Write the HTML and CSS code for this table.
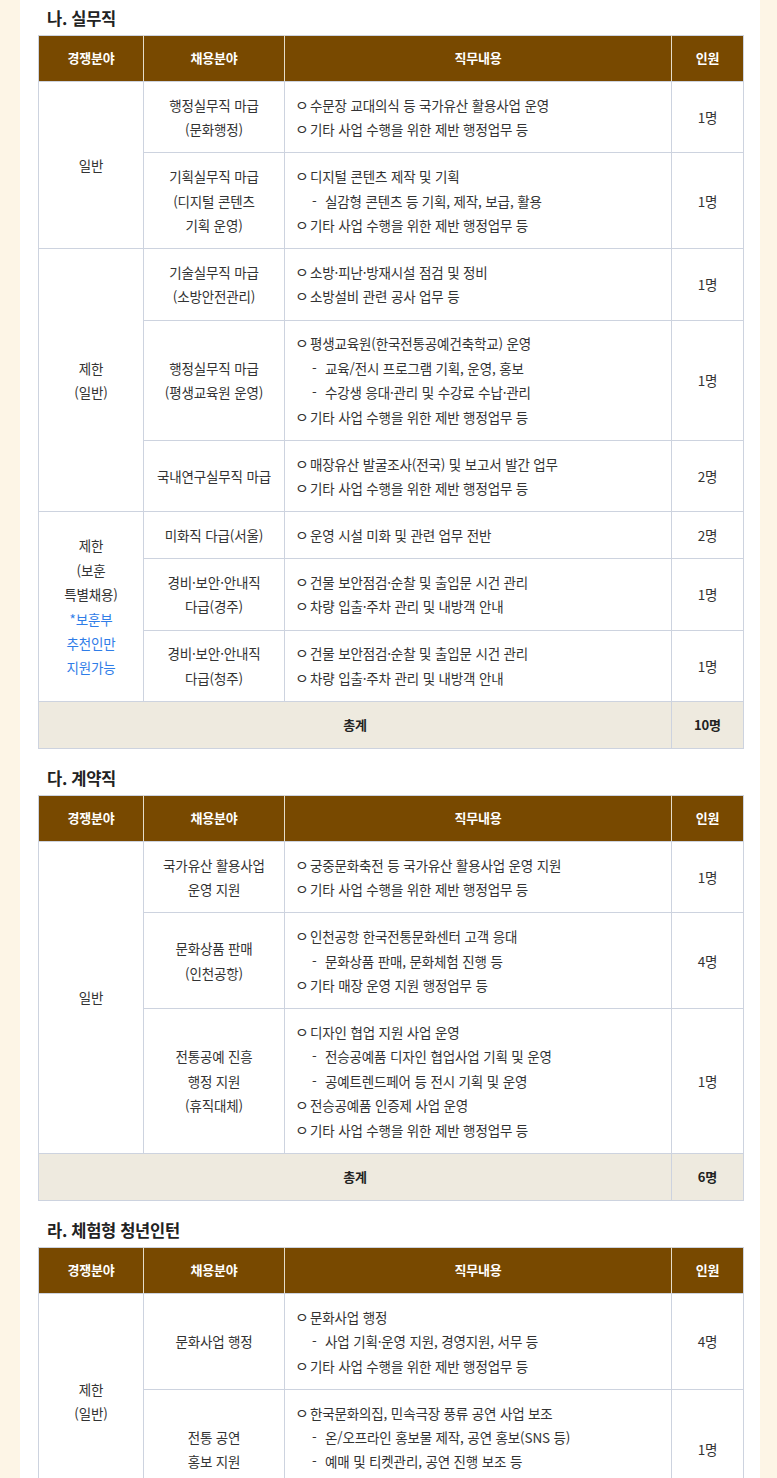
FILE: index.html
```html
<!DOCTYPE html>
<html lang="ko">
<head>
    <meta charset="UTF-8">
    <meta name="viewport" content="width=device-width, initial-scale=1.0">
    <title>채용분야</title>
    <link rel="stylesheet" href="styles.css">
</head>
<body>
    <div class="page">
        <div class="content">

            <h3 class="section-title first">나. 실무직</h3>
            <table class="recruit">
                <colgroup>
                    <col class="c-comp"><col class="c-field"><col class="c-job"><col class="c-num">
                </colgroup>
                <thead>
                    <tr><th>경쟁분야</th><th>채용분야</th><th>직무내용</th><th>인원</th></tr>
                </thead>
                <tbody>
                    <tr>
                        <td rowspan="2">일반</td>
                        <td>행정실무직 마급<br>(문화행정)</td>
                        <td class="job">
                            <p><span class="dot">ㅇ</span>수문장 교대의식 등 국가유산 활용사업 운영</p>
                            <p><span class="dot">ㅇ</span>기타 사업 수행을 위한 제반 행정업무 등</p>
                        </td>
                        <td>1명</td>
                    </tr>
                    <tr>
                        <td>기획실무직 마급<br>(디지털 콘텐츠<br>기획 운영)</td>
                        <td class="job">
                            <p><span class="dot">ㅇ</span>디지털 콘텐츠 제작 및 기획</p>
                            <p class="sub"><span class="dash">-</span>실감형 콘텐츠 등 기획, 제작, 보급, 활용</p>
                            <p><span class="dot">ㅇ</span>기타 사업 수행을 위한 제반 행정업무 등</p>
                        </td>
                        <td>1명</td>
                    </tr>
                    <tr>
                        <td rowspan="3">제한<br>(일반)</td>
                        <td>기술실무직 마급<br>(소방안전관리)</td>
                        <td class="job">
                            <p><span class="dot">ㅇ</span>소방·피난·방재시설 점검 및 정비</p>
                            <p><span class="dot">ㅇ</span>소방설비 관련 공사 업무 등</p>
                        </td>
                        <td>1명</td>
                    </tr>
                    <tr>
                        <td>행정실무직 마급<br>(평생교육원 운영)</td>
                        <td class="job">
                            <p><span class="dot">ㅇ</span>평생교육원(한국전통공예건축학교) 운영</p>
                            <p class="sub"><span class="dash">-</span>교육/전시 프로그램 기획, 운영, 홍보</p>
                            <p class="sub"><span class="dash">-</span>수강생 응대·관리 및 수강료 수납·관리</p>
                            <p><span class="dot">ㅇ</span>기타 사업 수행을 위한 제반 행정업무 등</p>
                        </td>
                        <td>1명</td>
                    </tr>
                    <tr>
                        <td>국내연구실무직 마급</td>
                        <td class="job">
                            <p><span class="dot">ㅇ</span>매장유산 발굴조사(전국) 및 보고서 발간 업무</p>
                            <p><span class="dot">ㅇ</span>기타 사업 수행을 위한 제반 행정업무 등</p>
                        </td>
                        <td>2명</td>
                    </tr>
                    <tr>
                        <td rowspan="3">제한<br>(보훈<br>특별채용)<br><span class="note">*보훈부<br>추천인만<br>지원가능</span></td>
                        <td>미화직 다급(서울)</td>
                        <td class="job">
                            <p><span class="dot">ㅇ</span>운영 시설 미화 및 관련 업무 전반</p>
                        </td>
                        <td>2명</td>
                    </tr>
                    <tr>
                        <td>경비·보안·안내직<br>다급(경주)</td>
                        <td class="job">
                            <p><span class="dot">ㅇ</span>건물 보안점검·순찰 및 출입문 시건 관리</p>
                            <p><span class="dot">ㅇ</span>차량 입출·주차 관리 및 내방객 안내</p>
                        </td>
                        <td>1명</td>
                    </tr>
                    <tr>
                        <td>경비·보안·안내직<br>다급(청주)</td>
                        <td class="job">
                            <p><span class="dot">ㅇ</span>건물 보안점검·순찰 및 출입문 시건 관리</p>
                            <p><span class="dot">ㅇ</span>차량 입출·주차 관리 및 내방객 안내</p>
                        </td>
                        <td>1명</td>
                    </tr>
                    <tr class="total">
                        <td colspan="3">총계</td>
                        <td>10명</td>
                    </tr>
                </tbody>
            </table>

            <h3 class="section-title">다. 계약직</h3>
            <table class="recruit">
                <colgroup>
                    <col class="c-comp"><col class="c-field"><col class="c-job"><col class="c-num">
                </colgroup>
                <thead>
                    <tr><th>경쟁분야</th><th>채용분야</th><th>직무내용</th><th>인원</th></tr>
                </thead>
                <tbody>
                    <tr>
                        <td rowspan="3">일반</td>
                        <td>국가유산 활용사업<br>운영 지원</td>
                        <td class="job">
                            <p><span class="dot">ㅇ</span>궁중문화축전 등 국가유산 활용사업 운영 지원</p>
                            <p><span class="dot">ㅇ</span>기타 사업 수행을 위한 제반 행정업무 등</p>
                        </td>
                        <td>1명</td>
                    </tr>
                    <tr>
                        <td>문화상품 판매<br>(인천공항)</td>
                        <td class="job">
                            <p><span class="dot">ㅇ</span>인천공항 한국전통문화센터 고객 응대</p>
                            <p class="sub"><span class="dash">-</span>문화상품 판매, 문화체험 진행 등</p>
                            <p><span class="dot">ㅇ</span>기타 매장 운영 지원 행정업무 등</p>
                        </td>
                        <td>4명</td>
                    </tr>
                    <tr>
                        <td>전통공예 진흥<br>행정 지원<br>(휴직대체)</td>
                        <td class="job">
                            <p><span class="dot">ㅇ</span>디자인 협업 지원 사업 운영</p>
                            <p class="sub"><span class="dash">-</span>전승공예품 디자인 협업사업 기획 및 운영</p>
                            <p class="sub"><span class="dash">-</span>공예트렌드페어 등 전시 기획 및 운영</p>
                            <p><span class="dot">ㅇ</span>전승공예품 인증제 사업 운영</p>
                            <p><span class="dot">ㅇ</span>기타 사업 수행을 위한 제반 행정업무 등</p>
                        </td>
                        <td>1명</td>
                    </tr>
                    <tr class="total">
                        <td colspan="3">총계</td>
                        <td>6명</td>
                    </tr>
                </tbody>
            </table>

            <h3 class="section-title">라. 체험형 청년인턴</h3>
            <table class="recruit">
                <colgroup>
                    <col class="c-comp"><col class="c-field"><col class="c-job"><col class="c-num">
                </colgroup>
                <thead>
                    <tr><th>경쟁분야</th><th>채용분야</th><th>직무내용</th><th>인원</th></tr>
                </thead>
                <tbody>
                    <tr>
                        <td rowspan="2">제한<br>(일반)</td>
                        <td>문화사업 행정</td>
                        <td class="job">
                            <p><span class="dot">ㅇ</span>문화사업 행정</p>
                            <p class="sub"><span class="dash">-</span>사업 기획·운영 지원, 경영지원, 서무 등</p>
                            <p><span class="dot">ㅇ</span>기타 사업 수행을 위한 제반 행정업무 등</p>
                        </td>
                        <td>4명</td>
                    </tr>
                    <tr>
                        <td>전통 공연<br>홍보 지원</td>
                        <td class="job">
                            <p><span class="dot">ㅇ</span>한국문화의집, 민속극장 풍류 공연 사업 보조</p>
                            <p class="sub"><span class="dash">-</span>온/오프라인 홍보물 제작, 공연 홍보(SNS 등)</p>
                            <p class="sub"><span class="dash">-</span>예매 및 티켓관리, 공연 진행 보조 등</p>
                            <p><span class="dot">ㅇ</span>기타 사업 수행을 위한 제반 행정업무 등</p>
                        </td>
                        <td>1명</td>
                    </tr>
                </tbody>
            </table>

        </div>
    </div>
</body>
</html>
```

FILE: styles.css
```css
body {
    margin: 0;
    background: #fdf5e6;
    font-family: "Noto Sans CJK KR", "Noto Sans", sans-serif;
    color: #333;
}

.page {
    padding: 0 17px 0 20px;
}

.content {
    background: #fff;
    padding: 0 17px 40px 18px;
}

.section-title {
    margin: 0;
    padding: 17px 0 5px 9px;
    font-size: 16.5px;
    line-height: 24px;
    font-weight: 700;
    color: #222;
    letter-spacing: -0.3px;
}

.section-title.first {
    padding-top: 6px;
}

.recruit {
    width: 705px;
    border-collapse: collapse;
    table-layout: fixed;
    font-size: 13.5px;
    line-height: 24.4px;
    letter-spacing: -0.15px;
}

.c-comp { width: 105px; }
.c-field { width: 141px; }
.c-job { width: 387px; }
.c-num { width: 72px; }

.recruit th {
    height: 45px;
    padding: 0;
    background: #784900;
    color: #fff;
    font-size: 13px;
    font-weight: 700;
    border: 1px solid #cdd3df;
    border-left-color: #e6dcc8;
    border-right-color: #e6dcc8;
}

.recruit th:first-child {
    border-left-color: #cdd3df;
}

.recruit th:last-child {
    border-right-color: #cdd3df;
}

.recruit td {
    padding: 10.8px 4px;
    border: 1px solid #cdd3df;
    text-align: center;
    vertical-align: middle;
}

.recruit td.job {
    text-align: left;
    padding-left: 10px;
}

.job p {
    display: flex;
    margin: 0;
    white-space: nowrap;
}

.job .dot {
    flex: none;
    width: 15px;
    font-size: 15px;
    line-height: 23px;
}

.job .sub {
    padding-left: 17px;
}

.job .dash {
    flex: none;
    width: 13px;
}

.note {
    color: #2f7de8;
}

.recruit .total td {
    height: 24px;
    background: #eeeadf;
    font-size: 13px;
    font-weight: 700;
    color: #222;
}
```
